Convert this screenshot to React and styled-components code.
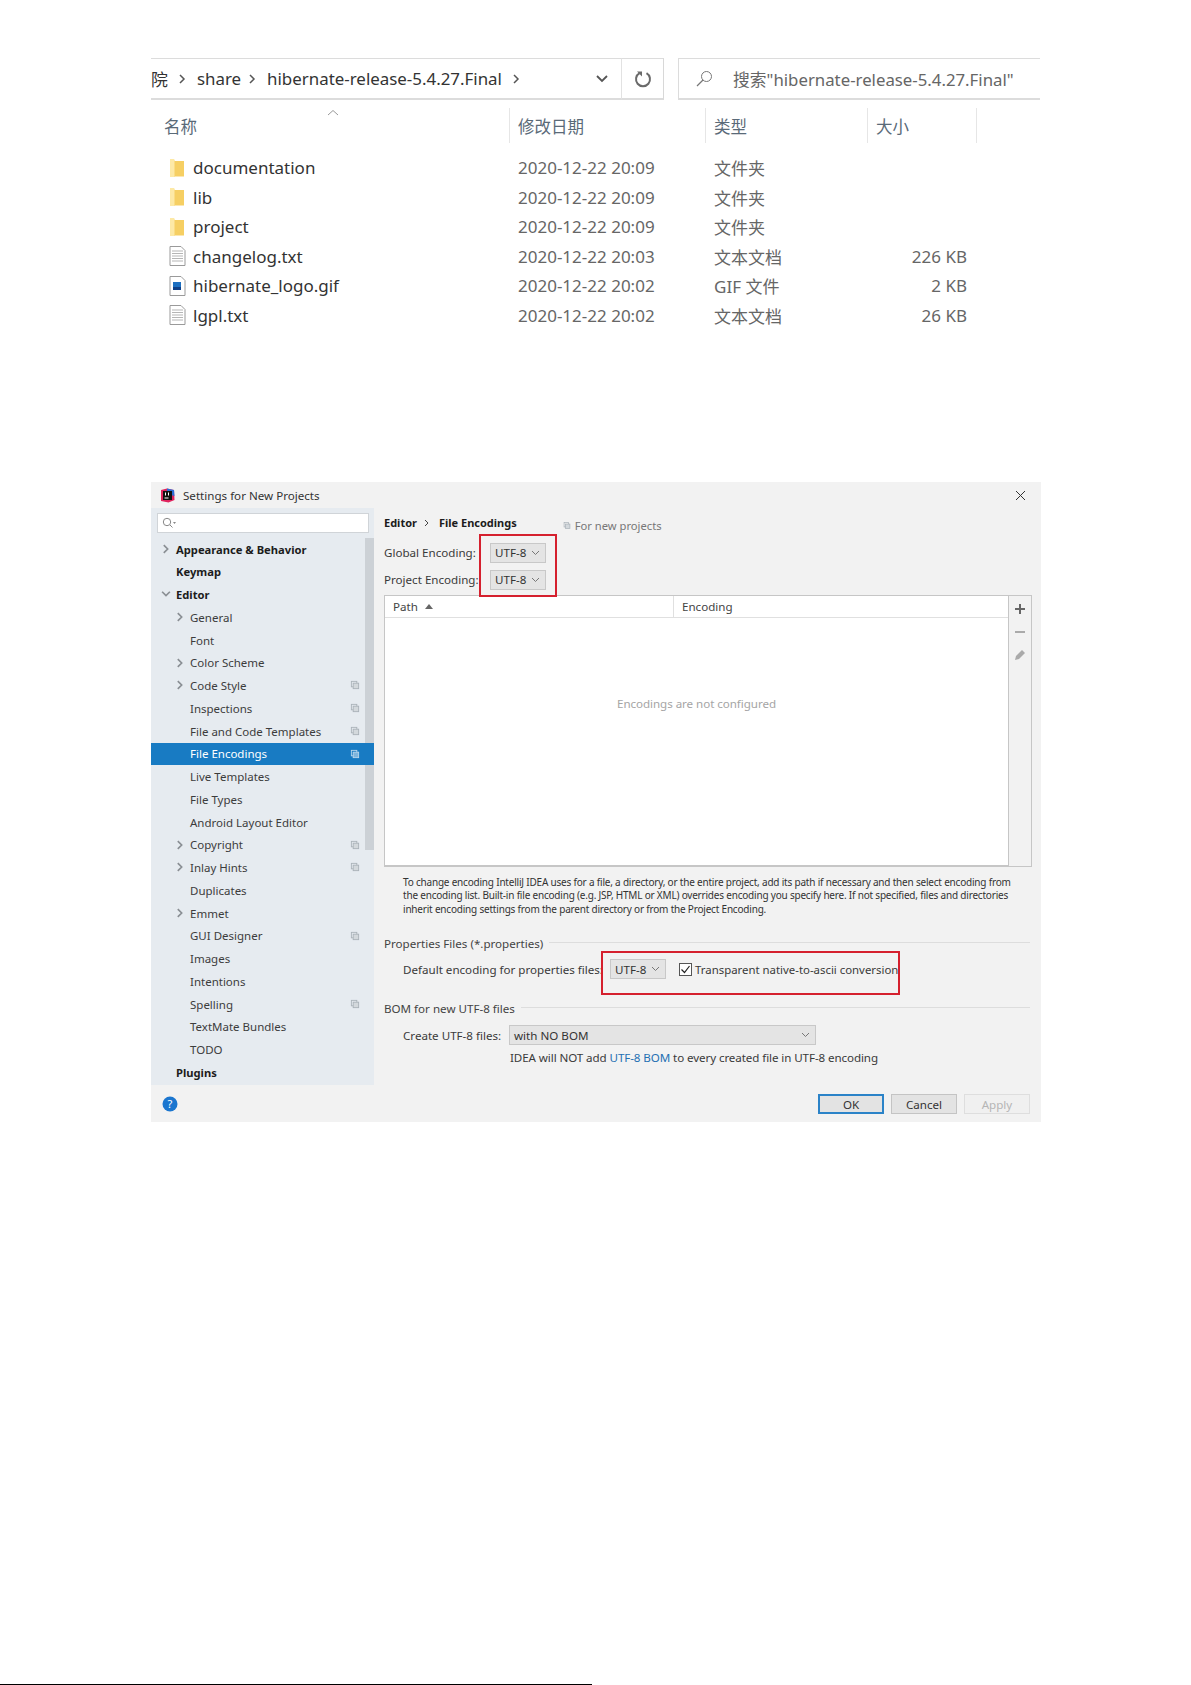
import React from "react";
import styled, { createGlobalStyle } from "styled-components";

const Global = createGlobalStyle`
  html, body { margin: 0; padding: 0; background: #fff; }
  * { box-sizing: border-box; }
`;
const CJK = `"Noto Sans", "Noto Sans CJK SC", sans-serif`;

const Page = styled.div`
  width: 1191px; height: 1685px; padding-top: 58px; background: #fff;
  display: flex; flex-direction: column; font-family: ${CJK}; overflow: hidden;
`;
const Explorer = styled.section`margin-left: 151px; width: 890px; color: #333;`;
const AddressRow = styled.div`display: flex; height: 42px;`;
const Crumbs = styled.div`
  width: 471px; border-top: 1px solid #dcdcdc; border-bottom: 2px solid #dcdcdc; border-right: 1px solid #e2e2e2;
  display: flex; align-items: center; font-size: 16.9px; color: #333; overflow: hidden;
`;
const Crumb = styled.span`white-space: nowrap; margin-left: ${p => p.$ml || 0}px;`;
const CrumbArrow = styled.svg`width: 10px; height: 12px; margin-left: ${p => p.$ml || 8}px; flex: none;`;
const DropChevron = styled.svg`width: 14px; height: 9px; margin-left: 74px; flex: none;`;
const Refresh = styled.div`
  width: 42px; border-top: 1px solid #dcdcdc; border-bottom: 2px solid #dcdcdc; border-right: 1px solid #d8d8d8;
  display: flex; align-items: center; justify-content: center;
`;
const SearchBar = styled.div`
  margin-left: 14px; width: 362px; border-top: 1px solid #dcdcdc; border-bottom: 2px solid #dcdcdc; border-left: 1px solid #dcdcdc;
  display: flex; align-items: center; padding-left: 17px; font-size: 16.8px; color: #666; white-space: nowrap;
`;
const SearchText = styled.span`margin-left: 20px;`;
const Columns = `display: grid; grid-template-columns: 359px 196px 162px 109px 1fr;`;
const HeaderRow = styled.div`${Columns} height: 35px; margin-top: 8px; position: relative; font-size: 16.5px; color: #5a6a78;`;
const HeadCell = styled.div`
  display: flex; align-items: center; padding-left: ${p => p.$pl || 8}px; padding-top: 1px;
  border-right: 1px solid #e6e6e6;
`;
const SortMark = styled.svg`position: absolute; left: 176px; top: 1px; width: 12px; height: 7px;`;
const Files = styled.div`margin-top: 10px;`;
const FileRow = styled.div`${Columns} height: 29.5px; align-items: center; font-size: 17px; color: #666;`;
const FileName = styled.div`display: flex; align-items: center; padding-left: 18px; color: #333;`;
const FileIcon = styled.svg`width: 17px; height: 20px; flex: none; margin-right: 7px;`;
const DateCell = styled.div`padding-left: 8px;`;
const SizeCell = styled.div`text-align: right; padding-right: 10px;`;

const Dialog = styled.section`
  margin-top: 151.75px; margin-left: 151px; width: 890px; height: 640px; background: #f2f2f2;
  display: flex; flex-direction: column; color: #3a3a3a;
`;
const TitleBar = styled.div`height: 26px; display: flex; align-items: center; padding: 2px 15px 0 9px; font-size: 11.6px; color: #333;`;
const TitleText = styled.span`margin-left: 8px; flex: 1;`;
const Body = styled.div`height: 577px; display: flex;`;
const Sidebar = styled.aside`width: 223px; background: #e6ebf0; position: relative; overflow: hidden; flex: none;`;
const SideSearch = styled.div`
  margin: 5px 5px 5px 6px; height: 20px; background: #fff; border: 1px solid #d0d4d8;
  display: flex; align-items: center; padding-left: 4px;
`;
const Scrollbar = styled.div`position: absolute; left: 214px; top: 30px; width: 9px; height: 312px; background: #ccd1d6;`;
const NavRow = styled.div`
  height: 22.75px; display: flex; align-items: center; position: relative;
  padding-left: ${p => (p.$level ? 39 : 25)}px; font-size: ${p => (p.$bold ? 11.2 : 11.5)}px; white-space: nowrap;
  font-weight: ${p => (p.$bold ? 700 : 400)};
  color: ${p => (p.$active ? "#fff" : p.$bold ? "#1c1c1c" : "#3c3c3c")};
  background: ${p => (p.$active ? "#187bc3" : "transparent")};
  z-index: ${p => (p.$active ? 2 : 1)};
`;
const NavArrow = styled.svg`position: absolute; left: ${p => (p.$level ? 24 : 10)}px; top: 6px; width: 10px; height: 10px;`;
const CopyMark = styled.svg`position: absolute; left: 199px; top: 6px; width: 10px; height: 10px;`;

const Panel = styled.div`width: 667px; flex: none; padding: 6px 9px 0 10px; position: relative; font-size: 11.6px;`;
const PathRow = styled.div`display: flex; height: 18px; align-items: center; font-weight: 700; font-size: 11px; color: #1c1c1c; white-space: nowrap;`;
const PathArrow = styled.svg`width: 7px; height: 8px; margin: 0 8.5px 0 6.5px;`;
const ForNew = styled.span`
  display: flex; align-items: center; gap: 4px; margin-left: 46px; margin-top: 6px;
  font-weight: 400; color: #777; font-size: 11.2px;
`;
const EncRow = styled.div`display: flex; align-items: center; height: 26px; margin-bottom: 1px;`;
const EncStack = styled.div`margin-top: 8px;`;
const Label = styled.span`width: ${p => p.$w}px; flex: none; white-space: nowrap;`;
const Combo = styled.div`
  width: ${p => p.$w || 56}px; height: 20px; background: #e4e4e4; border: 1px solid #c8c8c8; flex: none;
  display: flex; align-items: center; justify-content: space-between; padding: 0 5px 0 4px; color: #333; white-space: nowrap;
`;
const Caret = styled.svg`width: 9px; height: 6px;`;
const TableWrap = styled.div`display: flex; height: 272px; margin-top: 2px;`;
const Table = styled.div`flex: 1; background: #fff; border: 1px solid #c6c6c6; border-bottom-width: 2px; display: flex; flex-direction: column;`;
const TableHead = styled.div`
  display: grid; grid-template-columns: 289px 1fr; height: 22px; border-bottom: 1px solid #e0e0e0; flex: none;
`;
const TH = styled.div`display: flex; align-items: center; padding-left: 8px; gap: 7px; color: #444; border-right: 1px solid ${p => (p.$last ? "transparent" : "#e0e0e0")};`;
const Empty = styled.div`flex: 1; display: flex; align-items: center; justify-content: center; color: #a5a5a5; padding-bottom: 76px; letter-spacing: -0.05px;`;
const Tools = styled.div`
  width: 23px; border: 1px solid #c6c6c6; border-left: 0; display: flex; flex-direction: column; align-items: center; padding-top: 6px; gap: 9px;
`;
const ToolIcon = styled.svg`width: 14px; height: 14px;`;
const Note = styled.p`margin: 9px 0 0 19px; font-size: 10px; letter-spacing: -0.2px; line-height: 13.5px; color: #333; white-space: nowrap;`;
const GroupTitle = styled.div`
  display: flex; align-items: center; gap: 6px; height: 18px; margin-top: ${p => p.$mt}px; white-space: nowrap; color: #444;
  &::after { content: ""; flex: 1; height: 1px; background: #dddddd; margin: -2px 2px 0 0; }
`;
const FieldRow = styled.div`display: flex; align-items: center; height: 20px; margin: ${p => p.$mt}px 0 0 19px; white-space: nowrap;`;
const Check = styled.svg`width: 13px; height: 13px; margin: 0 3px 0 13px; flex: none;`;
const CheckLabel = styled.span`font-size: 11.4px;`;
const Hint = styled.div`margin: 6px 0 0 126px; height: 14px; line-height: 14px; white-space: nowrap; letter-spacing: -0.09px;`;
const Link = styled.span`color: #2470b3;`;
const RedBox = styled.div`
  position: absolute; left: ${p => p.$x}px; top: ${p => p.$y}px; width: ${p => p.$w}px; height: ${p => p.$h}px;
  border: 2px solid #d5202e; z-index: 5;
`;
const Footer = styled.div`height: 37px; display: flex; align-items: center; padding: 2px 11px 0 11px; gap: 7px;`;
const Help = styled.svg`width: 16px; height: 16px; margin-right: auto;`;
const Btn = styled.div`
  width: 66px; height: 20px; display: flex; align-items: center; justify-content: center; font-size: 11.6px;
  background: ${p => (p.$disabled ? "#f0f0f0" : "#e3e3e3")};
  color: ${p => (p.$disabled ? "#b5b5b5" : "#333")};
  border: ${p => (p.$primary ? "2px solid #2b83c8" : `1px solid ${p.$disabled ? "#dedede" : "#c4c4c4"}`)};
`;
const Rule = styled.div`margin-top: auto; width: 592px; height: 1px; background: #000;`;

const Right = ({ ml }) => (
  <CrumbArrow $ml={ml} viewBox="0 0 10 12"><path d="M3 2l4 4-4 4" fill="none" stroke="#555" strokeWidth="1.5" /></CrumbArrow>
);
const Folder = () => (
  <FileIcon viewBox="0 0 17 20">
    <path d="M1 1h4l1 1.5V19H1z" fill="#fde9a6" />
    <path d="M5.5 3H15v15.5H5.5z" fill="#f6cf63" />
  </FileIcon>
);
const TextFile = () => (
  <FileIcon viewBox="0 0 17 20">
    <path d="M1 .5h11l4 4v15H1z" fill="#fff" stroke="#9a9a9a" />
    <path d="M3 5h11M3 7.5h11M3 10h11M3 12.5h11M3 15h11" stroke="#b5b5b5" />
  </FileIcon>
);
const ImageFile = () => (
  <FileIcon viewBox="0 0 17 20">
    <path d="M1 .5h11l4 4v15H1z" fill="#fff" stroke="#9a9a9a" />
    <rect x="4" y="6" width="8" height="8" fill="#1d6fc0" />
    <rect x="4" y="11" width="8" height="3" fill="#0f3f86" />
  </FileIcon>
);
const icons = { folder: <Folder />, text: <TextFile />, image: <ImageFile /> };
const files = [
  ["documentation", "2020-12-22 20:09", "文件夹", "", "folder"],
  ["lib", "2020-12-22 20:09", "文件夹", "", "folder"],
  ["project", "2020-12-22 20:09", "文件夹", "", "folder"],
  ["changelog.txt", "2020-12-22 20:03", "文本文档", "226 KB", "text"],
  ["hibernate_logo.gif", "2020-12-22 20:02", "GIF 文件", "2 KB", "image"],
  ["lgpl.txt", "2020-12-22 20:02", "文本文档", "26 KB", "text"],
];
const nav = [
  { t: "Appearance & Behavior", b: 1, a: ">" },
  { t: "Keymap", b: 1 },
  { t: "Editor", b: 1, a: "v" },
  { t: "General", l: 1, a: ">" },
  { t: "Font", l: 1 },
  { t: "Color Scheme", l: 1, a: ">" },
  { t: "Code Style", l: 1, a: ">", c: 1 },
  { t: "Inspections", l: 1, c: 1 },
  { t: "File and Code Templates", l: 1, c: 1 },
  { t: "File Encodings", l: 1, c: 1, on: 1 },
  { t: "Live Templates", l: 1 },
  { t: "File Types", l: 1 },
  { t: "Android Layout Editor", l: 1 },
  { t: "Copyright", l: 1, a: ">", c: 1 },
  { t: "Inlay Hints", l: 1, a: ">", c: 1 },
  { t: "Duplicates", l: 1 },
  { t: "Emmet", l: 1, a: ">" },
  { t: "GUI Designer", l: 1, c: 1 },
  { t: "Images", l: 1 },
  { t: "Intentions", l: 1 },
  { t: "Spelling", l: 1, c: 1 },
  { t: "TextMate Bundles", l: 1 },
  { t: "TODO", l: 1 },
  { t: "Plugins", b: 1 },
];
const Copy = ({ light }) => (
  <>
    <rect x="1.5" y="1.5" width="6" height="6" fill="none" stroke={light ? "#b9d6ec" : "#aab2b9"} />
    <rect x="3.5" y="3.5" width="6" height="6" fill={light ? "#7fb5dd" : "#d3d8dc"} stroke={light ? "#b9d6ec" : "#aab2b9"} />
  </>
);
const Chevron = () => <Caret viewBox="0 0 9 6"><path d="M1 1l3.5 3.5L8 1" fill="none" stroke="#777" /></Caret>;

export default function App() {
  return (
    <Page>
      <Global />
      <Explorer>
        <AddressRow>
          <Crumbs>
            <Crumb>院</Crumb>
            <Right ml={9} />
            <Crumb $ml={10}>share</Crumb>
            <Right ml={6} />
            <Crumb $ml={10}>hibernate-release-5.4.27.Final</Crumb>
            <Right ml={9} />
            <DropChevron viewBox="0 0 14 9"><path d="M2 2l5 5 5-5" fill="none" stroke="#555" strokeWidth="1.8" /></DropChevron>
          </Crumbs>
          <Refresh>
            <svg width="18" height="18" viewBox="0 0 18 18"><path d="M5.500 3.200a7 7 0 1 0 7 0" fill="none" stroke="#6a6a6a" strokeWidth="2" /><path d="M3 1.500h5v5z" fill="#6a6a6a" /></svg>
          </Refresh>
          <SearchBar>
            <svg width="17" height="17" viewBox="0 0 17 17"><circle cx="10.500" cy="6.500" r="5" fill="none" stroke="#777" /><path d="M7 10l-6 6" stroke="#777" strokeWidth="1.300" /></svg>
            <SearchText>搜索"hibernate-release-5.4.27.Final"</SearchText>
          </SearchBar>
        </AddressRow>
        <HeaderRow>
          <HeadCell $pl={13}>名称</HeadCell>
          <HeadCell>修改日期</HeadCell>
          <HeadCell>类型</HeadCell>
          <HeadCell>大小</HeadCell>
          <SortMark viewBox="0 0 12 7"><path d="M1 6l5-4.500L11 6" fill="none" stroke="#999" /></SortMark>
        </HeaderRow>
        <Files>
          {files.map(f => (
            <FileRow key={f[0]}>
              <FileName>{icons[f[4]]}{f[0]}</FileName>
              <DateCell>{f[1]}</DateCell>
              <DateCell>{f[2]}</DateCell>
              <SizeCell>{f[3]}</SizeCell>
            </FileRow>
          ))}
        </Files>
      </Explorer>

      <Dialog>
        <TitleBar>
          <svg width="15" height="15" viewBox="0 0 15 15">
            <path d="M1 2l6-1.500L14 2l.5 10-6 2.500L1 13z" fill="#e0245e" />
            <path d="M7 .5L14 2l.5 6L7 6z" fill="#2b6fd6" />
            <rect x="3" y="3" width="9" height="9" fill="#111" />
            <rect x="4.500" y="9.500" width="4" height="1" fill="#fff" />
            <rect x="5" y="4.500" width="1" height="3" fill="#fff" />
            <rect x="8" y="4.500" width="1" height="3" fill="#fff" />
          </svg>
          <TitleText>Settings for New Projects</TitleText>
          <svg width="11" height="11" viewBox="0 0 11 11"><path d="M1 1l9 9M10 1l-9 9" stroke="#333" strokeWidth="1" /></svg>
        </TitleBar>
        <Body>
          <Sidebar>
            <SideSearch>
              <svg width="15" height="12" viewBox="0 0 15 12"><circle cx="5" cy="5" r="3.700" fill="none" stroke="#888" /><path d="M8 8l2.500 2.500" stroke="#888" /><path d="M11 5h3l-1.500 2z" fill="#888" /></svg>
            </SideSearch>
            <Scrollbar />
            {nav.map(n => (
              <NavRow key={n.t} $level={n.l} $bold={n.b} $active={n.on}>
                {n.a && (
                  <NavArrow $level={n.l} viewBox="0 0 9 9">
                    <path d={n.a === ">" ? "M2.500 1l3.500 3.500L2.500 8" : "M1 2.500l3.500 3.500L8 2.500"} fill="none" stroke="#8a8f94" strokeWidth="1.500" />
                  </NavArrow>
                )}
                {n.t}
                {n.c && <CopyMark viewBox="0 0 11 11"><Copy light={n.on} /></CopyMark>}
              </NavRow>
            ))}
          </Sidebar>
          <Panel>
            <PathRow>
              Editor
              <PathArrow viewBox="0 0 7 8"><path d="M2 1l3 3-3 3" fill="none" stroke="#444" /></PathArrow>
              File Encodings
              <ForNew>
                <svg width="8" height="9" viewBox="0 0 11 11"><Copy /></svg>
                For new projects
              </ForNew>
            </PathRow>
            <EncStack>
              <EncRow><Label $w={106}>Global Encoding:</Label><Combo>UTF-8<Chevron /></Combo></EncRow>
              <EncRow><Label $w={106}>Project Encoding:</Label><Combo>UTF-8<Chevron /></Combo></EncRow>
            </EncStack>
            <TableWrap>
              <Table>
                <TableHead>
                  <TH>Path<svg width="8" height="5" viewBox="0 0 8 5"><path d="M4 0l4 5H0z" fill="#666" /></svg></TH>
                  <TH $last>Encoding</TH>
                </TableHead>
                <Empty>Encodings are not configured</Empty>
              </Table>
              <Tools>
                <ToolIcon viewBox="0 0 14 14"><path d="M7 2v10M2 7h10" stroke="#666" strokeWidth="2" /></ToolIcon>
                <ToolIcon viewBox="0 0 14 14"><path d="M2 7h10" stroke="#aaa" strokeWidth="2" /></ToolIcon>
                <ToolIcon viewBox="0 0 14 14"><path d="M2 12l1-4 6-6 3 3-6 6z" fill="#aaa" /></ToolIcon>
              </Tools>
            </TableWrap>
            <Note>
              To change encoding IntelliJ IDEA uses for a file, a directory, or the entire project, add its path if necessary and then select encoding from<br />
              the encoding list. Built-in file encoding (e.g. JSP, HTML or XML) overrides encoding you specify here. If not specified, files and directories<br />
              inherit encoding settings from the parent directory or from the Project Encoding.
            </Note>
            <GroupTitle $mt={18}>Properties Files (*.properties)</GroupTitle>
            <FieldRow $mt={7}>
              <Label $w={207}>Default encoding for properties files:</Label>
              <Combo>UTF-8<Chevron /></Combo>
              <Check viewBox="0 0 13 13"><rect x=".5" y=".5" width="12" height="12" fill="#fff" stroke="#555" /><path d="M2.500 6.500l3 3 5-6.500" fill="none" stroke="#222" strokeWidth="1.200" /></Check>
              <CheckLabel>Transparent native-to-ascii conversion</CheckLabel>
            </FieldRow>
            <GroupTitle $mt={20}>BOM for new UTF-8 files</GroupTitle>
            <FieldRow $mt={8}>
              <Label $w={106}>Create UTF-8 files:</Label>
              <Combo $w={307}>with NO BOM<Chevron /></Combo>
            </FieldRow>
            <Hint>IDEA will NOT add <Link>UTF-8 BOM</Link> to every created file in UTF-8 encoding</Hint>
            <RedBox $x={105} $y={26} $w={78} $h={63} />
            <RedBox $x={227} $y={443} $w={299} $h={44} />
          </Panel>
        </Body>
        <Footer>
          <Help viewBox="0 0 16 16"><circle cx="8" cy="8" r="7.500" fill="#1b76cf" /><text x="8" y="12" textAnchor="middle" fontSize="11" fill="#fff" fontFamily="Noto Sans">?</text></Help>
          <Btn $primary>OK</Btn>
          <Btn>Cancel</Btn>
          <Btn $disabled>Apply</Btn>
        </Footer>
      </Dialog>
      <Rule />
    </Page>
  );
}
